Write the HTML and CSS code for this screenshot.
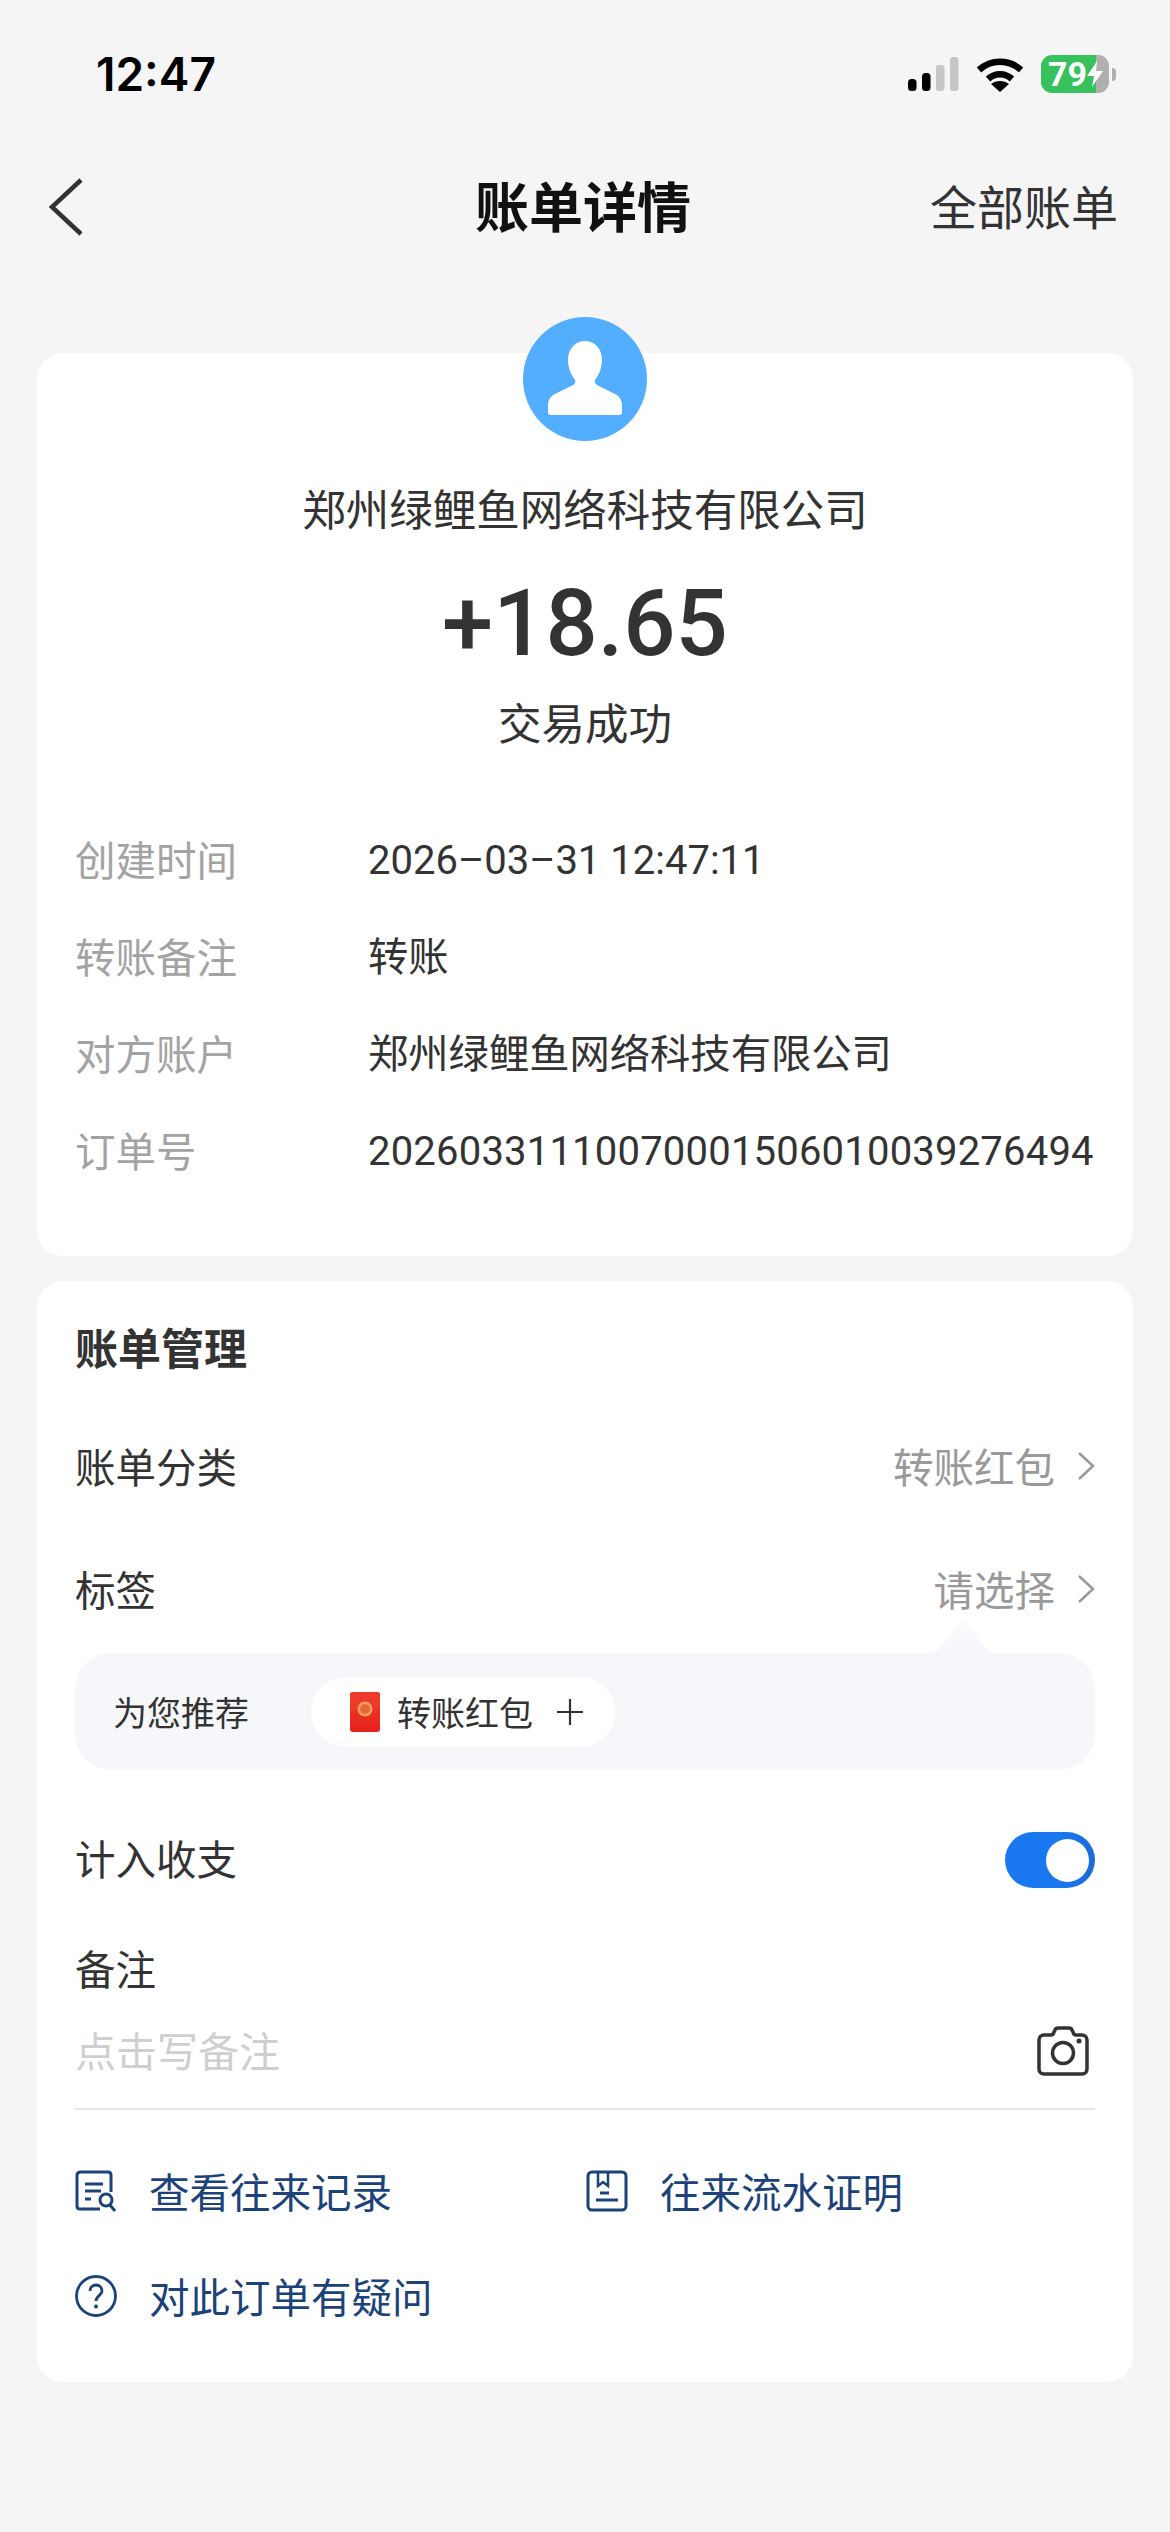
FILE: index.html
```html
<!DOCTYPE html>
<html lang="zh-CN">
<head>
<meta charset="utf-8">
<title>账单详情</title>
<link rel="stylesheet" href="styles.css">
</head>
<body>
<header class="status-bar">
  <span class="clock">12:47</span>
  <div class="status-icons">
    <svg class="signal" viewBox="0 0 51 34"><rect x="0" y="22" width="8.5" height="12" rx="3.5" fill="#000"/><rect x="14" y="16" width="8.5" height="18" rx="3.5" fill="#000"/><rect x="28" y="8" width="8.5" height="26" rx="3" fill="#c6c6c6"/><rect x="42" y="0" width="8.5" height="34" rx="3" fill="#c6c6c6"/></svg>
    <svg class="wifi" viewBox="0 0 48 35"><path d="M3 13C15 2 33 2 45 13" fill="none" stroke="#000" stroke-width="6.5"/><path d="M12 22C19 15.500 29 15.500 36 22" fill="none" stroke="#000" stroke-width="6.500"/><path d="M24 35L15 27C20 23 28 23 33 27Z" fill="#000"/></svg>
    <div class="battery">
      <div class="battery-body"><span class="battery-level">79</span>
        <svg class="bolt" viewBox="0 0 16 26"><path d="M10 0L0 15H7L5 26L16 10H9Z" fill="#fff"/></svg>
      </div>
      <span class="battery-tip"></span>
    </div>
  </div>
</header>
<nav class="nav">
  <svg class="back" viewBox="0 0 36 58"><path d="M33 2L4 29L33 56" fill="none" stroke="#333" stroke-width="4.500"/></svg>
  <h1 class="nav-title">账单详情</h1>
  <span class="nav-action">全部账单</span>
</nav>
<main>
  <section class="card summary">
    <div class="avatar">
      <svg viewBox="0 0 124 124"><circle cx="62" cy="62" r="62" fill="#53aeff"/><path d="M62 24C72 24 79 32 79 43C79 52 75 59 72 63C71 66 73 68 78 70L92 77C96 79 99 83 99 88V95Q99 98 96 98H28Q25 98 25 95V88C25 83 28 79 32 77L46 70C51 68 53 66 52 63C49 59 45 52 45 43C45 32 52 24 62 24Z" fill="#fff"/></svg>
    </div>
    <div class="payee">郑州绿鲤鱼网络科技有限公司</div>
    <div class="amount">+18.65</div>
    <div class="state">交易成功</div>
    <dl class="details">
      <div class="detail"><dt>创建时间</dt><dd class="detail-date">2026–03–31 12:47:11</dd></div>
      <div class="detail"><dt>转账备注</dt><dd>转账</dd></div>
      <div class="detail"><dt>对方账户</dt><dd>郑州绿鲤鱼网络科技有限公司</dd></div>
      <div class="detail"><dt>订单号</dt><dd class="detail-order">20260331110070001506010039276494</dd></div>
    </dl>
  </section>
  <section class="card manage">
    <h2 class="manage-title">账单管理</h2>
    <div class="row row-category">
      <span>账单分类</span>
      <span class="row-value">转账红包<svg class="chevron" viewBox="0 0 18 30"><path d="M2 2L16 15L2 28" fill="none" stroke="#999" stroke-width="2.500"/></svg></span>
    </div>
    <div class="row row-tag">
      <span>标签</span>
      <span class="row-value">请选择<svg class="chevron" viewBox="0 0 18 30"><path d="M2 2L16 15L2 28" fill="none" stroke="#999" stroke-width="2.500"/></svg></span>
    </div>
    <div class="suggest">
      <svg class="suggest-tail" viewBox="0 0 70 36">
        <defs><linearGradient id="tail" x1="0" y1="0" x2="0" y2="1"><stop offset="0" stop-color="#fbfbfd"/><stop offset="1" stop-color="#f6f7fb"/></linearGradient></defs>
        <path d="M0 36C6 35 10 32 14 28L29 6C32 2 38 2 41 6L56 28C60 32 64 35 70 36Z" fill="url(#tail)"/>
      </svg>
      <span class="suggest-label">为您推荐</span>
      <div class="pill">
        <svg class="envelope" viewBox="0 0 30 40">
          <defs><linearGradient id="red" x1="0" y1="0" x2="0" y2="1"><stop offset="0" stop-color="#f6402e"/><stop offset="1" stop-color="#e4201a"/></linearGradient></defs>
          <rect width="30" height="40" rx="3" fill="url(#red)"/>
          <path d="M0 15Q15 24 30 15V3Q30 0 27 0H3Q0 0 0 3Z" fill="#ee3a2a"/>
          <circle cx="15" cy="17" r="7.500" fill="#f6a25a"/>
          <circle cx="15" cy="17" r="5" fill="#e8663a"/>
        </svg>
        <span>转账红包</span>
        <svg class="plus" viewBox="0 0 26 26"><path d="M13 0V26M0 13H26" stroke="#333" stroke-width="2.200"/></svg>
      </div>
    </div>
    <div class="row row-toggle">
      <span>计入收支</span>
      <span class="toggle"><span class="toggle-knob"></span></span>
    </div>
    <div class="note-label">备注</div>
    <div class="note-input">
      <span class="note-placeholder">点击写备注</span>
      <svg class="camera" viewBox="0 0 52 50"><path d="M7 9H14C16 9 16.500 8 17 6L18 4C18.500 2.500 20 2 21 2H32C33 2 34.500 2.500 35 4L36 6C36.500 8 37 9 39 9H45C48 9 50 11 50 14V43C50 46 48 48 45 48H7C4 48 2 46 2 43V14C2 11 4 9 7 9Z" fill="none" stroke="#333" stroke-width="3.500"/><circle cx="26" cy="27" r="10.500" fill="none" stroke="#333" stroke-width="3.500"/><circle cx="42" cy="15" r="2.500" fill="#333"/></svg>
    </div>
    <div class="links">
      <a class="link">
        <svg class="link-icon" viewBox="0 0 42 42"><path d="M36 22V5Q36 2 33 2H6Q2 2 2 5V36Q2 39 5 39H25" fill="none" stroke="#1b4279" stroke-width="3"/><path d="M10 14H28M10 21H26M10 29H16" stroke="#1b4279" stroke-width="3"/><circle cx="31" cy="30" r="6" fill="none" stroke="#1b4279" stroke-width="3"/><path d="M35 35L40 41" stroke="#1b4279" stroke-width="3"/></svg>
        <span>查看往来记录</span>
      </a>
      <a class="link">
        <svg class="link-icon" viewBox="0 0 42 42"><rect x="2" y="2" width="38" height="38" rx="4" fill="none" stroke="#1b4279" stroke-width="3"/><path d="M12 3V16L17 12L22 16V3" fill="none" stroke="#1b4279" stroke-width="2.500"/><path d="M14 23H23M10 30H32" stroke="#1b4279" stroke-width="3"/></svg>
        <span>往来流水证明</span>
      </a>
      <a class="link">
        <svg class="link-icon" viewBox="0 0 42 42"><circle cx="21" cy="21" r="19.500" fill="none" stroke="#1b4279" stroke-width="2.800"/><path d="M15 16C15 12 18 10 21 10C25 10 27 13 27 16C27 20 21 21 21 26" fill="none" stroke="#1b4279" stroke-width="2.800"/><circle cx="21" cy="31.500" r="2" fill="#1b4279"/></svg>
        <span>对此订单有疑问</span>
      </a>
    </div>
  </section>
</main>
</body>
</html>
```
FILE: styles.css
```css
* { box-sizing: border-box; }
html, body { margin: 0; padding: 0; }
body {
  width: 1170px;
  height: 2532px;
  overflow: hidden;
  background: #f5f5f6;
  color: #333;
  font-family: "Noto Sans CJK SC", "Noto Sans", sans-serif;
  font-size: 40.500px;
  line-height: 60px;
}
svg { display: block; flex: none; }

.status-bar {
  height: 148px;
  padding: 0 54px 0 96px;
  display: flex;
  align-items: center;
  justify-content: space-between;
}
.clock {
  font-family: Inter, sans-serif;
  font-weight: 600;
  font-size: 46px;
  color: #000;
}
.status-icons { display: flex; align-items: center; }
.signal { width: 51px; height: 34px; }
.wifi { width: 48px; height: 35px; margin-left: 17px; }
.battery { display: flex; align-items: center; margin-left: 17px; }
.battery-body {
  width: 68px;
  height: 38px;
  border-radius: 11px;
  background: linear-gradient(90deg, #37c25e 81%, #afafaf 81%);
  display: flex;
  align-items: center;
  padding-left: 7px;
}
.battery-level {
  font-family: Roboto, sans-serif;
  font-weight: 700;
  font-size: 34px;
  line-height: 38px;
  color: #fff;
}
.bolt { width: 16px; height: 26px; }
.battery-tip {
  width: 4px;
  height: 13px;
  margin-left: 3px;
  background: #afafaf;
  border-radius: 0 4px 4px 0;
}

.nav {
  height: 118px;
  padding: 0 52px 0 48px;
  display: grid;
  grid-template-columns: 1fr auto 1fr;
  align-items: center;
}
.back { width: 36px; height: 58px; }
.nav-title {
  margin: 0 0 5px;
  font-size: 54px;
  line-height: 70px;
  font-weight: 700;
  color: #111;
}
.nav-action { font-size: 47px; justify-self: end; color: #333; margin-bottom: 5px; }

main { padding: 87px 37px 0; }
.card { background: #fff; border-radius: 26px; }

.summary {
  position: relative;
  padding: 125px 38px 56px;
  text-align: center;
}
.avatar {
  position: absolute;
  left: 486px;
  top: -36px;
  width: 124px;
  height: 124px;
}
.payee { font-size: 43.500px; color: #333; }
.amount {
  margin-top: 31px;
  font-family: Roboto, sans-serif;
  font-weight: 500;
  font-size: 92px;
  line-height: 110px;
  color: #333;
}
.state { margin-top: 13px; font-size: 43.500px; }
.details { margin: 60px 0 0; text-align: left; }
.detail { height: 97px; display: flex; align-items: center; }
.detail dt { width: 293px; color: #a3a3a3; flex: none; padding-bottom: 4px; }
.detail dd { margin: 0; white-space: nowrap; font-size: 40.300px; font-family: Roboto, "Noto Sans CJK SC", sans-serif; }
.detail .detail-date { font-size: 40px; }
.detail .detail-order { font-size: 40px; letter-spacing: 0.200px; }

.manage { margin-top: 25px; padding: 35px 38px 56px; }
.manage-title { margin: 0; font-size: 43px; font-weight: 700; line-height: 60px; }
.row { display: flex; align-items: center; justify-content: space-between; }
.row-category { margin-top: 60px; height: 60px; }
.row-tag { margin-top: 63px; height: 60px; }
.row-value { display: flex; align-items: center; color: #999; }
.chevron { width: 18px; height: 30px; margin-left: 22px; }

.suggest {
  position: relative;
  margin-top: 34px;
  height: 117px;
  padding-left: 38px;
  border-radius: 36px;
  background: #f6f7fb;
  display: flex;
  align-items: center;
}
.suggest-tail {
  position: absolute;
  left: 853px;
  top: -35px;
  width: 70px;
  height: 36px;
}
.suggest-label { width: 198px; font-size: 34px; }
.pill {
  width: 304px;
  height: 70px;
  padding-left: 39px;
  border-radius: 35px;
  background: #fff;
  display: flex;
  align-items: center;
  font-size: 34px;
}
.envelope { width: 30px; height: 40px; margin-right: 17px; }
.plus { width: 26px; height: 26px; margin-left: 24px; }

.row-toggle { margin-top: 61px; height: 57px; }
.row-toggle > span:first-child { padding-bottom: 4px; }
.toggle {
  width: 90px;
  height: 56px;
  padding: 7px 6px;
  border-radius: 28px;
  background: linear-gradient(90deg, #1a77f2 60%, #1b6bd8);
  display: flex;
  justify-content: flex-end;
}
.toggle-knob { width: 43px; height: 43px; border-radius: 50%; background: #fff; }

.note-label { margin-top: 50px; }
.note-input {
  margin-top: 21px;
  padding-bottom: 26px;
  border-bottom: 2px solid #e6e6e6;
  display: flex;
  align-items: center;
  justify-content: space-between;
  padding-right: 6px;
}
.note-placeholder { color: #cfcfcf; font-size: 41px; padding-bottom: 3px; }
.camera { width: 52px; height: 50px; }

.links {
  margin-top: 51px;
  display: grid;
  grid-template-columns: 511px 1fr;
  row-gap: 45px;
}
.link {
  height: 60px;
  display: flex;
  align-items: center;
  gap: 32px;
  color: #1b4279;
}
.link-icon { width: 42px; height: 42px; }
```
